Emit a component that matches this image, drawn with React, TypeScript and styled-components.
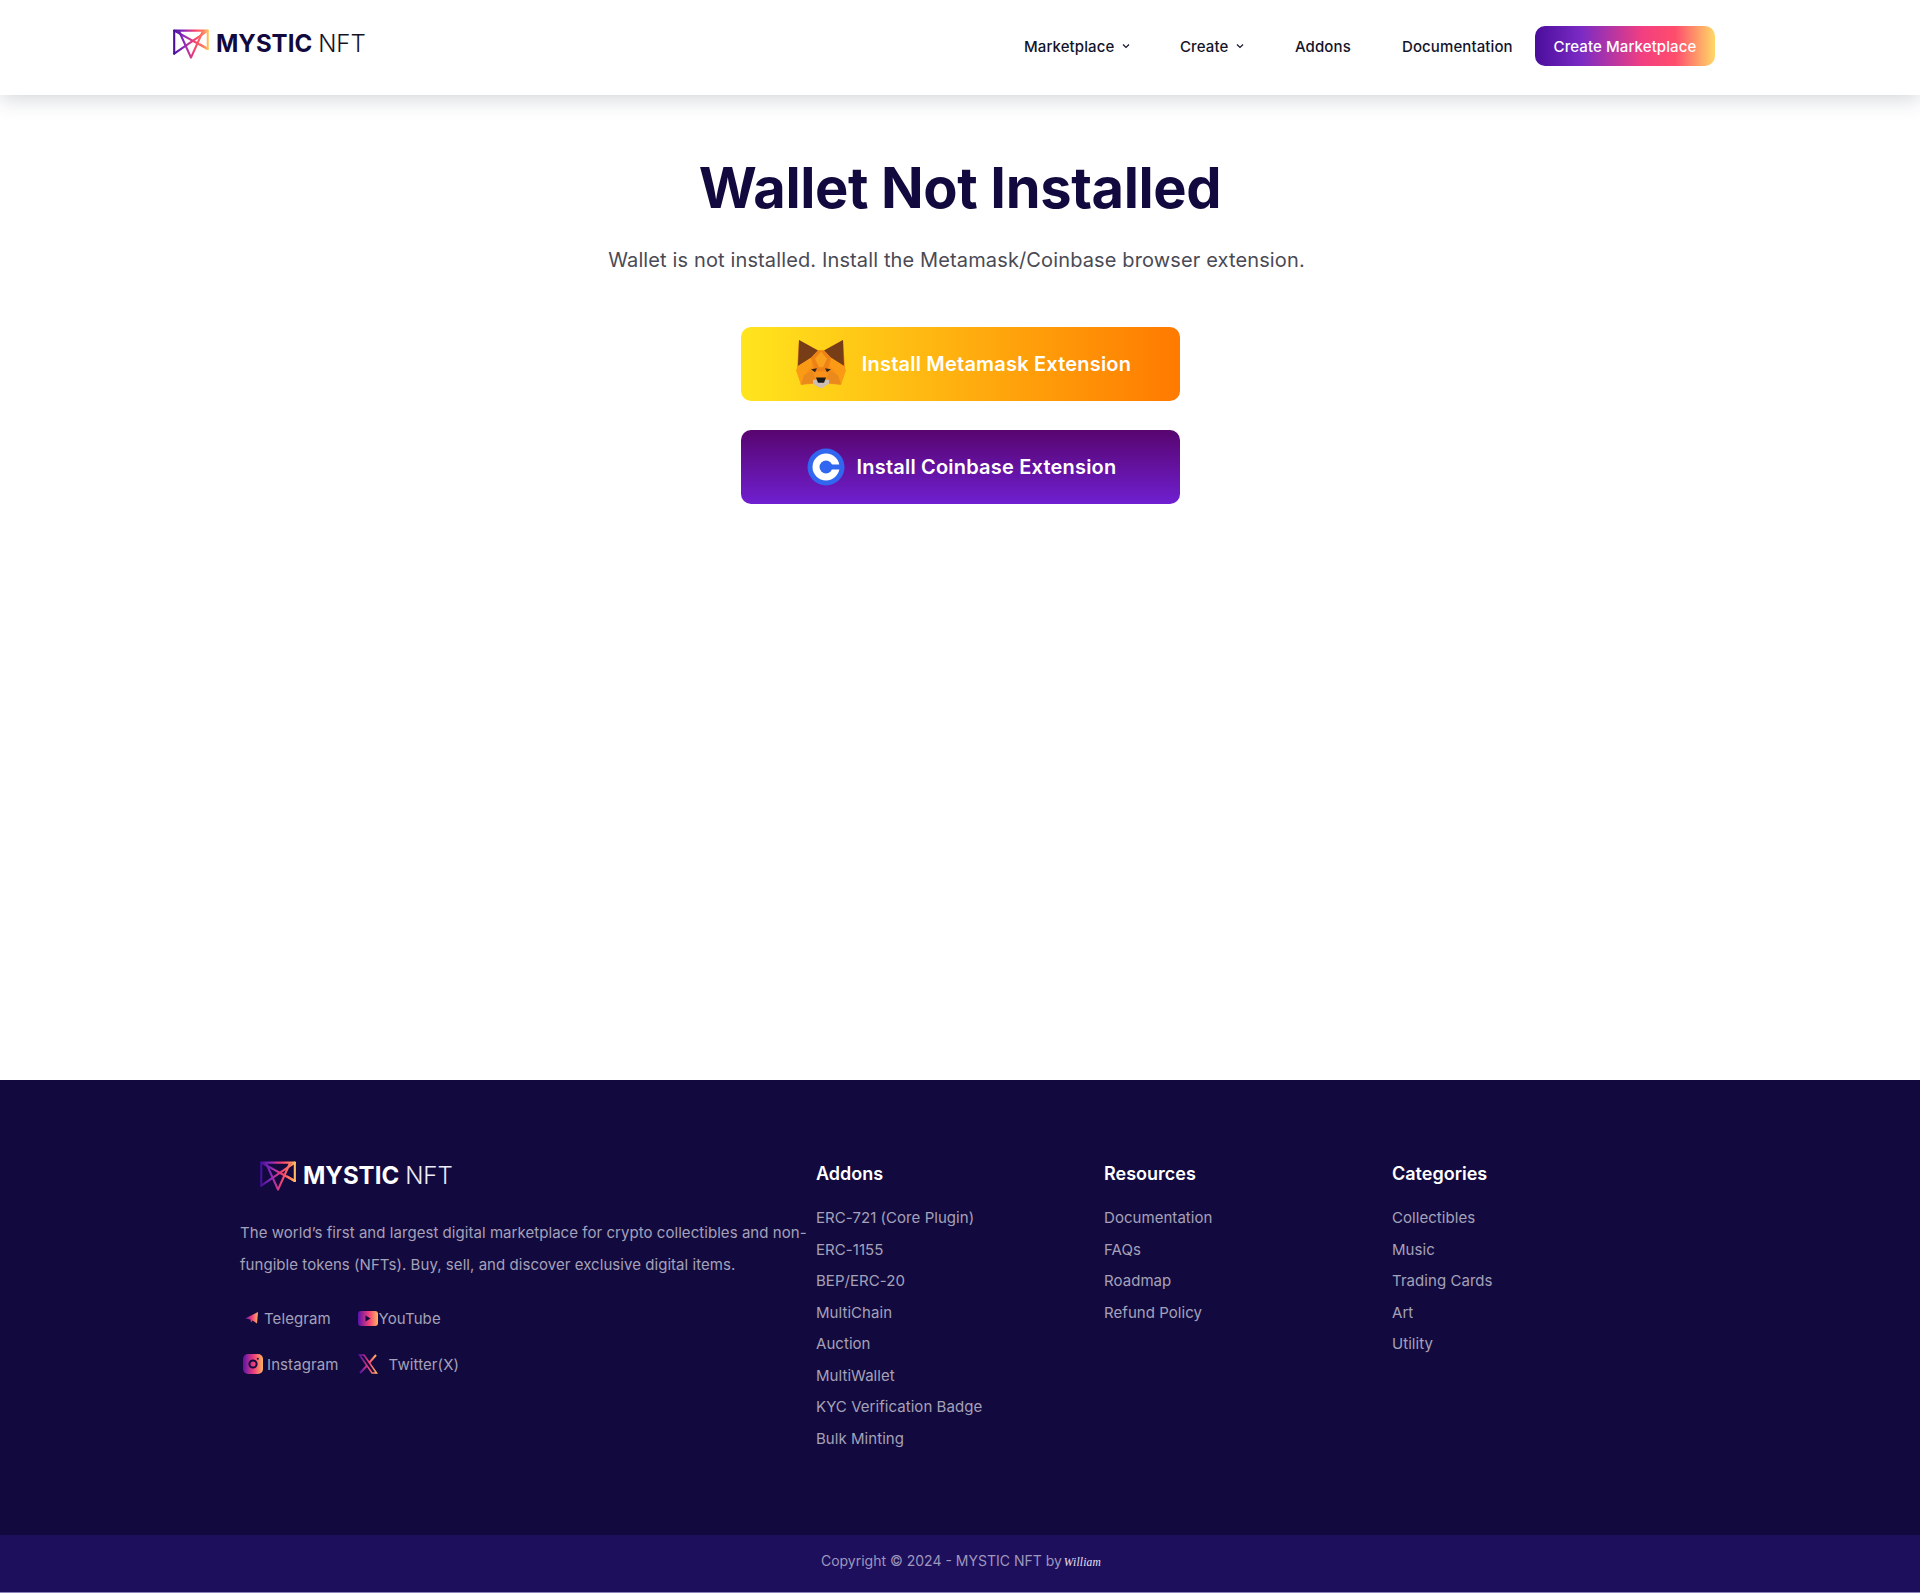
import { FC } from 'react';
import styled, { createGlobalStyle } from 'styled-components';

const GlobalStyle = createGlobalStyle`
  * { box-sizing: border-box; }
  html, body { margin: 0; padding: 0; background: #fff; }
  body { font-family: Inter, "Liberation Sans", sans-serif; }
  a { text-decoration: none; color: inherit; }
  ul { list-style: none; margin: 0; padding: 0; }
`;

const Page = styled.div`
  display: flex;
  flex-direction: column;
  min-height: 1593px;
  background: #fff;
`;

const Header = styled.header`
  height: 95px;
  background: #fff;
  box-shadow: 0 4px 20px rgba(30, 50, 70, 0.2);
  position: relative;
  z-index: 2;
`;

const HeaderInner = styled.div`
  height: 100%;
  display: flex;
  align-items: center;
  justify-content: space-between;
  padding: 0 205px 7px 173px;
`;

const LogoLink = styled.a<{ $dark?: boolean }>`
  display: flex;
  align-items: center;
  gap: 7px;
  font-size: 24px;
  line-height: 30px;
  color: ${(p) => (p.$dark ? '#fff' : '#120a3e')};
  b { font-weight: 700; }
  span {
    font-weight: 300;
    margin-left: -1px;
    color: ${(p) => (p.$dark ? '#eeeaf8' : '#15131f')};
  }
`;

const Nav = styled.nav`
  display: flex;
  align-items: center;
  margin-top: 4px;
`;

const NavItem = styled.a<{ $width: number }>`
  display: flex;
  align-items: center;
  gap: 7px;
  width: ${(p) => p.$width}px;
  font-size: 15px;
  font-weight: 500;
  letter-spacing: 0.1px;
  color: #13142a;
`;

const CreateButton = styled.a`
  width: 180px;
  height: 40px;
  display: flex;
  align-items: center;
  justify-content: center;
  border-radius: 10px;
  color: #fff;
  font-size: 15px;
  font-weight: 500;
  letter-spacing: 0.1px;
  background: linear-gradient(90deg, #4a0d9c 0%, #7c2bc4 26%, #f23f80 60%, #ff4d6d 78%, #ffd966 100%);
`;

const Main = styled.main`
  flex: 1;
  display: flex;
  flex-direction: column;
  align-items: center;
  padding-top: 57px;
`;

const Title = styled.h1`
  margin: 0;
  font-size: 56px;
  line-height: 72px;
  font-weight: 700;
  letter-spacing: -0.37px;
  color: #120a3e;
`;

const Lead = styled.p`
  margin: 22px 7px 0 0;
  font-size: 20px;
  line-height: 28px;
  letter-spacing: 0.13px;
  color: #4a4a55;
`;

const InstallButton = styled.a<{ $variant: 'metamask' | 'coinbase' }>`
  width: 439px;
  height: 74px;
  margin-top: ${(p) => (p.$variant === 'metamask' ? 53 : 29)}px;
  padding-left: ${(p) => (p.$variant === 'metamask' ? 7 : 3)}px;
  display: flex;
  align-items: center;
  justify-content: center;
  gap: ${(p) => (p.$variant === 'metamask' ? 16 : 12)}px;
  border-radius: 10px;
  color: #fff;
  font-size: 20px;
  font-weight: 600;
  letter-spacing: 0.2px;
  background: ${(p) =>
    p.$variant === 'metamask'
      ? 'linear-gradient(90deg, #ffe51e 0%, #ff7a00 100%)'
      : 'linear-gradient(180deg, #58056f 0%, #6f1fd0 100%)'};
`;

const Footer = styled.footer`
  background: #120a3e;
`;

const FooterGrid = styled.div`
  width: 1440px;
  height: 455px;
  margin: 0 auto;
  padding-top: 82px;
  display: grid;
  grid-template-columns: 576px 288px 288px 288px;
`;

const AboutColumn = styled.div`
  display: flex;
  flex-direction: column;
  align-items: flex-start;
`;

const FooterLogoWrap = styled.div`
  margin-top: -1px;
  padding-left: 20px;
`;

const About = styled.p`
  margin: 26px 0 0;
  width: 576px;
  font-size: 15px;
  line-height: 32px;
  letter-spacing: 0.05px;
  color: #a5a1b9;
`;

const SocialGrid = styled.div`
  margin-top: 25px;
  padding-left: 3px;
  display: grid;
  grid-template-columns: auto auto;
  column-gap: 19px;
  row-gap: 22px;
`;

const SocialLink = styled.a<{ $gap: number }>`
  display: flex;
  align-items: center;
  gap: ${(p) => p.$gap}px;
  height: 24px;
  font-size: 15px;
  letter-spacing: 0.1px;
  color: #a5a1b9;
`;

const LinkColumn = styled.div`
  display: flex;
  flex-direction: column;
`;

const ColumnTitle = styled.h4`
  margin: 0 0 16px;
  font-size: 18px;
  line-height: 24px;
  font-weight: 600;
  color: #fff;
`;

const LinkItem = styled.li`
  font-size: 15px;
  line-height: 31.5px;
  letter-spacing: 0.05px;
  color: #a5a1b9;
`;

const CopyrightBar = styled.div`
  height: 58px;
  background: #1e0f5c;
  border-bottom: 1px solid #8a7fb8;
  display: flex;
  align-items: center;
  justify-content: center;
  gap: 2px;
  padding: 0 0 7px 2px;
  font-size: 14px;
  color: #9d97bd;
`;

const Signature = styled.span`
  font-family: "Liberation Serif", serif;
  font-style: italic;
  font-size: 11.5px;
  letter-spacing: 0.2px;
  color: #e6e3f2;
  margin-top: 3px;
`;

const LogoMark: FC<{ id: string }> = ({ id }) => (
  <svg width="36" height="30" viewBox="0 0 36 30" fill="none">
    <defs>
      <linearGradient id={id} x1="0" y1="0" x2="36" y2="0" gradientUnits="userSpaceOnUse">
        <stop offset="0" stopColor="#3d0d96" />
        <stop offset="0.3" stopColor="#8d28bc" />
        <stop offset="0.6" stopColor="#f6406f" />
        <stop offset="0.85" stopColor="#ff7f5e" />
        <stop offset="1" stopColor="#ffd166" />
      </linearGradient>
    </defs>
    <g stroke={`url(#${id})`} strokeWidth="2.1" strokeLinejoin="round" strokeLinecap="round">
      <path d="M1.2 24.6 V1.6 H34.8 V20 L27.5 15.6" />
      <path d="M1.2 24.6 L34.8 1.6" />
      <path d="M1.2 1.6 L34.8 20" />
      <path d="M6 2 L18 28.6 L30 2" />
    </g>
  </svg>
);

const Logo: FC<{ id: string; dark?: boolean }> = ({ id, dark }) => (
  <LogoLink $dark={dark}>
    <LogoMark id={id} />
    <b>MYSTIC</b>
    <span>NFT</span>
  </LogoLink>
);

const Chevron: FC = () => (
  <svg width="10" height="10" viewBox="0 0 10 10" fill="none" stroke="#13142a" strokeWidth="1.2">
    <path d="M2 3.5 L5 6.5 L8 3.5" />
  </svg>
);

const FoxIcon: FC = () => (
  <svg width="50" height="48" viewBox="0 0 50 46" preserveAspectRatio="none">
    <path d="M3 0 L22 10 H28 L47 0 L49 26 L45 43 L32 42 L25 46 L18 42 L5 43 L1 26 Z" fill="#f8901a" />
    <path d="M3 0 L22 10 L15 17 L2 25 Z" fill="#763d16" />
    <path d="M47 0 L28 10 L35 17 L48 25 Z" fill="#763d16" />
    <path d="M22 10 H28 L35 17 L31 30 H19 L15 17 Z" fill="#ee8216" />
    <path d="M19 18 L25 11 L31 18 L27 26 H23 Z" fill="#f9a11c" />
    <path d="M2 25 L15 17 L16 25 L8 34 L5 43 L0 29 Z" fill="#fb9a14" />
    <path d="M48 25 L35 17 L34 25 L42 34 L45 43 L50 29 Z" fill="#fb9a14" />
    <path d="M8 34 L16 29 L19 36 L17 41 L5 43 Z" fill="#ea8a1c" />
    <path d="M42 34 L34 29 L31 36 L33 41 L45 43 Z" fill="#ea8a1c" />
    <path d="M15 28 L21 27 L19 31 Z M35 28 L29 27 L31 31 Z" fill="#33261c" />
    <path d="M17 38 H33 L33 42 L26 46 H24 L17 42 Z" fill="#cdbfb3" />
    <path d="M20 36 H30 L28 41 H22 Z" fill="#1c1a18" />
  </svg>
);

const CoinbaseIcon: FC = () => (
  <svg width="38" height="38" viewBox="0 0 38 38">
    <circle cx="19" cy="19" r="18.5" fill="#3166f0" />
    <circle cx="19" cy="19" r="13.5" fill="#fff" />
    <circle cx="19" cy="19" r="6.5" fill="#3166f0" />
    <rect x="19" y="16.5" width="14" height="5" fill="#3166f0" />
  </svg>
);

const SocialDefs: FC = () => (
  <svg width="0" height="0" style={{ position: 'absolute' }}>
    <defs>
      <linearGradient id="social" x1="0" y1="0" x2="1" y2="0">
        <stop offset="0" stopColor="#5a12a8" />
        <stop offset="0.55" stopColor="#f0407a" />
        <stop offset="1" stopColor="#ffb35c" />
      </linearGradient>
    </defs>
  </svg>
);

const TelegramIcon: FC = () => (
  <svg width="18" height="14" viewBox="0 0 18 14">
    <path d="M2 7.5 L15 1 L14 12.5 L9.5 9.5 L8 11.5 L7.5 8.5 Z" fill="url(#social)" />
  </svg>
);

const YoutubeIcon: FC = () => (
  <svg width="20" height="15" viewBox="0 0 20 15">
    <rect width="20" height="15" rx="3" fill="url(#social)" />
    <path d="M7.5 4.5 L12.5 7.5 L7.5 10.5 Z" fill="#120a3e" />
  </svg>
);

const InstagramIcon: FC = () => (
  <svg width="20" height="20" viewBox="0 0 20 20">
    <rect width="20" height="20" rx="5" fill="url(#social)" />
    <circle cx="10" cy="10" r="3.6" fill="none" stroke="#120a3e" strokeWidth="2" />
    <circle cx="14.8" cy="4.8" r="1" fill="#120a3e" />
  </svg>
);

const XIcon: FC = () => (
  <svg width="20" height="20" viewBox="0 0 20 20" fill="none" stroke="url(#social)">
    <path d="M1.5 1 H6 L18.5 19 H14 Z" strokeWidth="1.6" />
    <path d="M18 1 L11 9 M9 11.5 L2 19" strokeWidth="2" />
  </svg>
);

const addons = ['ERC-721 (Core Plugin)', 'ERC-1155', 'BEP/ERC-20', 'MultiChain', 'Auction', 'MultiWallet', 'KYC Verification Badge', 'Bulk Minting'];
const resources = ['Documentation', 'FAQs', 'Roadmap', 'Refund Policy'];
const categories = ['Collectibles', 'Music', 'Trading Cards', 'Art', 'Utility'];

const FooterColumn: FC<{ title: string; items: string[] }> = ({ title, items }) => (
  <LinkColumn>
    <ColumnTitle>{title}</ColumnTitle>
    <ul>
      {items.map((item) => (
        <LinkItem key={item}>{item}</LinkItem>
      ))}
    </ul>
  </LinkColumn>
);

const App: FC = () => (
  <Page>
    <GlobalStyle />
    <SocialDefs />
    <Header>
      <HeaderInner>
        <Logo id="logo-top" />
        <Nav>
          <NavItem $width={156}>Marketplace <Chevron /></NavItem>
          <NavItem $width={115}>Create <Chevron /></NavItem>
          <NavItem $width={107}>Addons</NavItem>
          <NavItem $width={133}>Documentation</NavItem>
          <CreateButton>Create Marketplace</CreateButton>
        </Nav>
      </HeaderInner>
    </Header>
    <Main>
      <Title>Wallet Not Installed</Title>
      <Lead>Wallet is not installed. Install the Metamask/Coinbase browser extension.</Lead>
      <InstallButton $variant="metamask">
        <FoxIcon />
        Install Metamask Extension
      </InstallButton>
      <InstallButton $variant="coinbase">
        <CoinbaseIcon />
        Install Coinbase Extension
      </InstallButton>
    </Main>
    <Footer>
      <FooterGrid>
        <AboutColumn>
          <FooterLogoWrap>
            <Logo id="logo-bottom" dark />
          </FooterLogoWrap>
          <About>
            The world’s first and largest digital marketplace for crypto collectibles and non-fungible tokens (NFTs). Buy, sell, and discover exclusive digital items.
          </About>
          <SocialGrid>
            <SocialLink $gap={3}><TelegramIcon />Telegram</SocialLink>
            <SocialLink $gap={1}><YoutubeIcon />YouTube</SocialLink>
            <SocialLink $gap={4}><InstagramIcon />Instagram</SocialLink>
            <SocialLink $gap={11}><XIcon />Twitter(X)</SocialLink>
          </SocialGrid>
        </AboutColumn>
        <FooterColumn title="Addons" items={addons} />
        <FooterColumn title="Resources" items={resources} />
        <FooterColumn title="Categories" items={categories} />
      </FooterGrid>
      <CopyrightBar>
        Copyright © 2024 - MYSTIC NFT by <Signature>William</Signature>
      </CopyrightBar>
    </Footer>
  </Page>
);

export default App;
